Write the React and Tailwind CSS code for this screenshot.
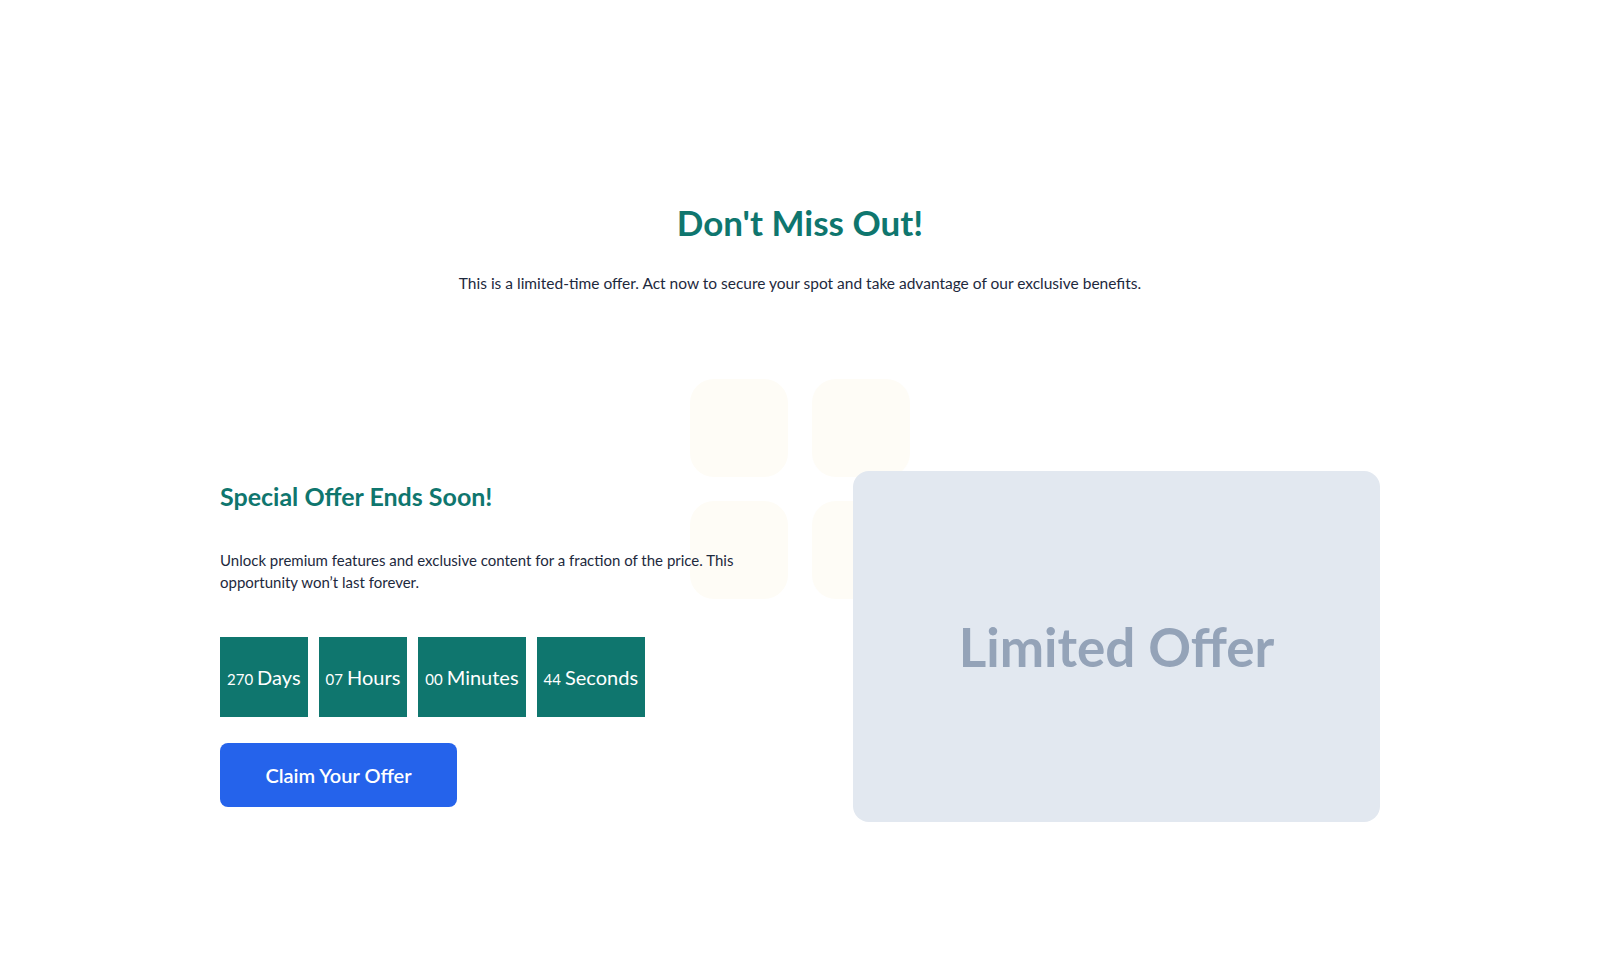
import React from "react";

const countdown = [
  { value: "270", label: "Days" },
  { value: "07", label: "Hours" },
  { value: "00", label: "Minutes" },
  { value: "44", label: "Seconds" },
];

const App = () => {
  return (
    <div className="min-h-screen bg-white text-slate-800" style={{ fontFamily: "Lato, 'Noto Sans', sans-serif" }}>
      <section className="pt-[202px] pb-[150px]">
        <div className="mx-auto w-[1160px]">
          <h1 className="text-center text-[35px] leading-10 font-bold text-[#0f766e]">Don't Miss Out!</h1>
          <p className="mt-[29px] text-center text-[15.5px] leading-6 text-slate-800">
            This is a limited-time offer. Act now to secure your spot and take advantage of our exclusive benefits.
          </p>

          <div className="relative mt-[84px] pt-[92px] flex items-center justify-between">
            {/* decorative squares */}
            <div className="absolute left-[470px] top-0 grid grid-cols-2 gap-6">
              <div className="w-[98px] h-[98px] rounded-3xl bg-[#fefcf6]"></div>
              <div className="w-[98px] h-[98px] rounded-3xl bg-[#fefcf6]"></div>
              <div className="w-[98px] h-[98px] rounded-3xl bg-[#fefcf6]"></div>
              <div className="w-[98px] h-[98px] rounded-3xl bg-[#fefcf6]"></div>
            </div>

            <div className="relative w-[540px] pb-1.5">
              <h2 className="text-[25px] leading-8 font-bold text-[#0f766e]">Special Offer Ends Soon!</h2>
              <p className="mt-[37px] text-[15px] leading-[22px] text-slate-800">
                Unlock premium features and exclusive content for a fraction of the price. This opportunity won’t last forever.
              </p>
              <div className="mt-[44px] flex gap-[11px]">
                {countdown.map((item) => (
                  <div key={item.label} className="h-20 px-[7px] bg-[#0f766e] text-white flex items-center">
                    <div className="flex items-baseline">
                      <span className="text-[15px]">{item.value}</span>
                      <span className="ml-1 text-xl">{item.label}</span>
                    </div>
                  </div>
                ))}
              </div>
              <button className="mt-[26px] w-[237px] h-16 rounded-lg bg-[#2563eb] text-white text-xl font-semibold">
                Claim Your Offer
              </button>
            </div>

            <div className="relative w-[527px] h-[351px] rounded-2xl bg-[#e2e8f0] flex items-center justify-center">
              <span className="text-[53px] font-bold text-[#94a3b8]">Limited Offer</span>
            </div>
          </div>
        </div>
      </section>
    </div>
  );
};

export default App;
